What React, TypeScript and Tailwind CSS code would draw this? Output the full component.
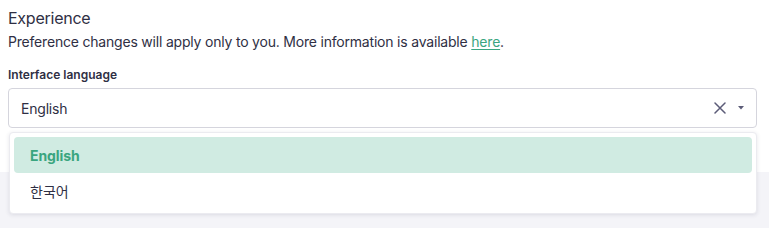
import React from "react";

export default function App() {
  return (
    <div className="w-[769px] h-[228px] bg-[#f4f4f8] overflow-hidden" style={{ fontFamily: "Inter, 'Noto Sans CJK KR', sans-serif" }}>
      <div className="relative bg-white h-[172px] pl-2 pr-3 pt-[6px] text-[#2f2f44]">
        <h2 className="text-[16px] leading-6 font-normal tracking-[-0.25px]">Experience</h2>
        <p className="mt-[2px] text-[14px] leading-5 tracking-[-0.2px] text-[#2f2f44]">
          Preference changes will apply only to you. More information is available{" "}
          <a href="#" className="text-[#3aa57f] underline underline-offset-2">here</a>.
        </p>
        <div className="mt-[15px] text-[12px] leading-4 font-semibold">Interface language</div>
        <div className="mt-[5px] h-10 border border-[#d5d5dd] rounded-[4px] flex items-center pl-3 pr-[12px]">
          <span className="flex-1 text-[14px] tracking-[-0.2px]">English</span>
          <svg width="12" height="12" viewBox="0 0 12 12" className="mr-[12px]">
            <path d="M1 1 L11 11 M11 1 L1 11" stroke="#5c5c78" strokeWidth="1.5" strokeLinecap="round" />
          </svg>
          <svg width="6" height="4" viewBox="0 0 6 4">
            <path d="M0 0 L6 0 L3 3.5 Z" fill="#5c5c78" />
          </svg>
        </div>
        <div className="absolute left-[9px] top-[132px] w-[748px] bg-white border border-[#ebebf0] rounded-[4px] shadow-[0_1px_4px_rgba(40,40,70,0.12)] p-1 z-10">
          <div className="h-9 rounded-[4px] bg-[#d0ebe2] flex items-center pl-4 text-[14px] font-bold tracking-[-0.1px] text-[#3aa57f]">English</div>
          <div className="h-9 flex items-center pl-4 text-[14px] text-[#2f2f44]">한국어</div>
        </div>
      </div>
    </div>
  );
}
